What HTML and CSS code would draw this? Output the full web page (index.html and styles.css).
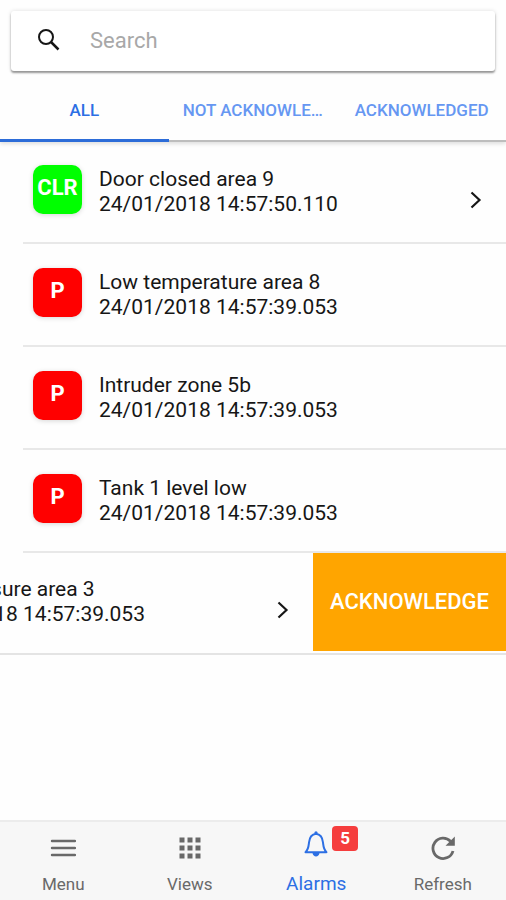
FILE: index.html
```html
<!DOCTYPE html>
<html lang="en">
<head>
<meta charset="utf-8">
<meta name="viewport" content="width=device-width, initial-scale=1">
<title>Alarms</title>
<link rel="stylesheet" href="styles.css">
</head>
<body>
<header class="header">
  <label class="search">
    <svg class="search-icon" viewBox="0 0 24 24" aria-hidden="true"><circle cx="9" cy="9" r="7" fill="none" stroke="currentColor" stroke-width="2"/><path d="M14 14L21.500 21.500" stroke="currentColor" stroke-width="2.5"/></svg>
    <input class="search-input" type="search" placeholder="Search" aria-label="Search">
  </label>
  <nav class="tabs">
    <button class="tab tab-active" type="button"><span>ALL</span></button>
    <button class="tab" type="button"><span>NOT ACKNOWLEDGED</span></button>
    <button class="tab" type="button"><span>ACKNOWLEDGED</span></button>
  </nav>
</header>
<main class="content">
  <ul class="list">
    <li class="row">
      <div class="item">
        <span class="state state-clear">CLR</span>
        <div class="details"><p>Door closed area 9</p><p>24/01/2018 14:57:50.110</p></div>
        <svg class="chevron" viewBox="0 0 12 18" aria-hidden="true"><path d="M1.5 1.5L9.5 9L1.5 16.5" fill="none" stroke="currentColor" stroke-width="2.2"/></svg>
      </div>
    </li>
    <li class="row">
      <div class="item">
        <span class="state">P</span>
        <div class="details"><p>Low temperature area 8</p><p>24/01/2018 14:57:39.053</p></div>
      </div>
    </li>
    <li class="row">
      <div class="item">
        <span class="state">P</span>
        <div class="details"><p>Intruder zone 5b</p><p>24/01/2018 14:57:39.053</p></div>
      </div>
    </li>
    <li class="row">
      <div class="item">
        <span class="state">P</span>
        <div class="details"><p>Tank 1 level low</p><p>24/01/2018 14:57:39.053</p></div>
      </div>
    </li>
    <li class="row row-open">
      <div class="item">
        <span class="state">P</span>
        <div class="details"><p>Low pressure area 3</p><p>24/01/2018 14:57:39.053</p></div>
        <svg class="chevron" viewBox="0 0 12 18" aria-hidden="true"><path d="M1.5 1.5L9.5 9L1.5 16.5" fill="none" stroke="currentColor" stroke-width="2.2"/></svg>
      </div>
      <button class="acknowledge" type="button">ACKNOWLEDGE</button>
    </li>
  </ul>
</main>
<nav class="bar">
  <a class="bar-link" href="#menu">
    <span class="bar-icon"><svg width="26" height="26" viewBox="0 0 26 26" aria-hidden="true"><path d="M2 6H25M2 13H25M2 20H25" stroke="currentColor" stroke-width="2.4" stroke-linecap="round"/></svg></span>
    <span>Menu</span>
  </a>
  <a class="bar-link" href="#views">
    <span class="bar-icon"><svg width="26" height="26" viewBox="0 0 26 26" aria-hidden="true"><path d="M2.500 2.500h5v5h-5zM10.500 2.500h5v5h-5zM18.500 2.500h5v5h-5zM2.500 10.500h5v5h-5zM10.500 10.500h5v5h-5zM18.500 10.500h5v5h-5zM2.500 18.500h5v5h-5zM10.500 18.500h5v5h-5zM18.500 18.500h5v5h-5z" fill="currentColor"/></svg></span>
    <span>Views</span>
  </a>
  <a class="bar-link bar-link-active" href="#alarms">
    <span class="bar-icon"><svg width="26" height="28" viewBox="0 0 26 28" aria-hidden="true"><path d="M2.5 22.2C5.5 19.5 5.5 17 6 12.500C6.500 7.500 8.500 4.300 13 3.800C17.500 4.300 19.500 7.500 20 12.500C20.500 17 20.500 19.500 23.500 22.200Z" fill="none" stroke="currentColor" stroke-width="2" stroke-linejoin="round"/><circle cx="13" cy="2.800" r="1.600" fill="currentColor"/><path d="M9.500 23H16.500C16 27.600 10 27.600 9.500 23Z" fill="currentColor"/></svg><span class="badge">5</span></span>
    <span>Alarms</span>
  </a>
  <a class="bar-link" href="#refresh">
    <span class="bar-icon"><svg width="26" height="26" viewBox="0 0 26 26" aria-hidden="true"><path d="M20.500 6.200A10.200 10.200 0 1 0 23 16" fill="none" stroke="currentColor" stroke-width="2.800"/><path d="M24.800 1.500V10.800H15.500Z" fill="currentColor"/></svg></span>
    <span>Refresh</span>
  </a>
</nav>
</body>
</html>
```
FILE: styles.css
```css
* {
  box-sizing: border-box;
}

body {
  margin: 0;
  min-height: 100vh;
  display: flex;
  flex-direction: column;
  background: #fefefe;
  color: #161616;
  font-family: Roboto, "Liberation Sans", sans-serif;
}

button,
input {
  font: inherit;
}

.header {
  padding-top: 11px;
  border-bottom: 2px solid #bdbdbd;
  box-shadow: 0 2px 4px #00000020;
}

.search {
  display: flex;
  align-items: center;
  gap: 29px;
  height: 60px;
  margin: 0 11px;
  padding: 0 26px 2px;
  border-radius: 3px;
  background: #fff;
  box-shadow: 0 2px 2px #00000060, 0 0 4px #00000020;
}

.search-icon {
  width: 24px;
  height: 24px;
  flex: none;
}

.search-input {
  flex: 1;
  min-width: 0;
  padding: 0;
  border: 0;
  outline: 0;
  background: none;
  font-size: 22px;
}

.search-input::placeholder {
  color: #a8a8a8;
}

.tabs {
  display: grid;
  grid-template-columns: repeat(3, 1fr);
  margin: 8px 0 -2px;
}

.tab {
  min-width: 0;
  height: 63px;
  padding: 2px 14px 0;
  border: 0;
  border-bottom: 3px solid transparent;
  background: none;
  color: #6697f2;
  font-size: 17px;
  font-weight: 500;
}

.tab span {
  display: block;
  overflow: hidden;
  text-overflow: ellipsis;
  white-space: nowrap;
}

.tab-active {
  border-bottom-color: #2c6cd8;
  color: #2c6fe4;
}

.content {
  flex: 1;
}

.list {
  margin: -1px 0 0;
  padding: 0;
  list-style: none;
}

.row {
  display: flex;
  overflow: hidden;
}

.row-open {
  justify-content: flex-end;
  border-bottom: 2px solid #e4e4e4;
}

.item {
  position: relative;
  display: flex;
  flex: none;
  align-items: center;
  width: 100%;
  height: 103px;
  padding: 0 24px 6px 33px;
}

.row:not(.row-open) .item::after {
  content: "";
  position: absolute;
  right: 0;
  bottom: 0;
  left: 23px;
  height: 2px;
  background: #e8e8e8;
}

.row-open .item {
  height: 100px;
}

.state {
  flex: none;
  width: 49px;
  height: 49px;
  margin-right: 17px;
  border-radius: 10px;
  background: #f00;
  box-shadow: 0 1px 5px #00000028;
  color: #fff;
  font-size: 22px;
  font-weight: 700;
  line-height: 45px;
  text-align: center;
}

.state-clear {
  background: #0f0;
}

.details {
  flex: 1;
  padding-top: 4px;
  font-size: 21px;
  line-height: 25px;
  white-space: nowrap;
}

.details p {
  margin: 0;
}

.chevron {
  width: 12px;
  height: 18px;
  margin-top: 20px;
}

.acknowledge {
  flex: none;
  margin: 0 0 2px;
  padding: 0 17px 2px;
  border: 0;
  background: #ffa500;
  color: #fff;
  font-size: 22px;
  font-weight: 500;
}

.bar {
  display: grid;
  grid-template-columns: repeat(4, 1fr);
  height: 80px;
  border-top: 2px solid #ececec;
  background: #f7f7f7;
}

.bar-link {
  display: flex;
  flex-direction: column;
  align-items: center;
  justify-content: space-between;
  padding: 13px 0 6px;
  color: #696969;
  font-size: 17px;
  line-height: 20px;
  text-decoration: none;
}

.bar-link-active {
  padding-top: 8px;
  color: #2c6fe4;
  font-size: 19px;
}

.bar-icon {
  position: relative;
  display: flex;
}

.badge {
  position: absolute;
  top: -4px;
  left: 29px;
  width: 26px;
  border-radius: 4px;
  background: #f53d3d;
  color: #fff;
  font-size: 17px;
  font-weight: 700;
  line-height: 25px;
  text-align: center;
}
```
